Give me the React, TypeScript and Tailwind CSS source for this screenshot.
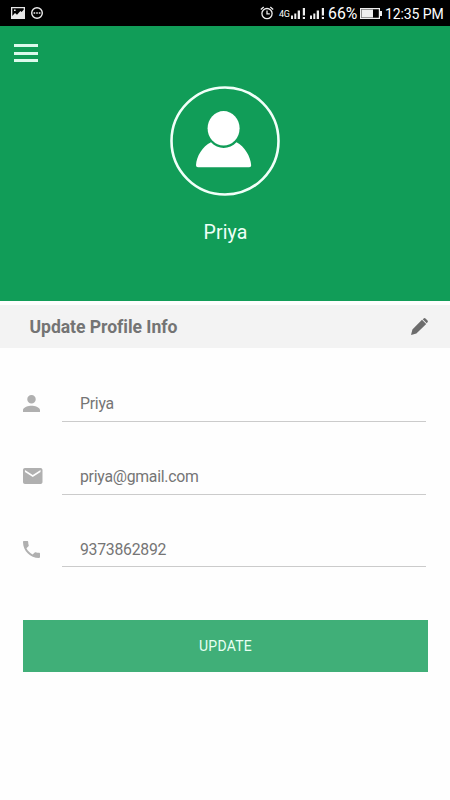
import { useState } from 'react';
import type { ReactNode } from 'react';

interface FieldProps {
  icon: ReactNode;
  type: string;
  label: string;
  value: string;
  onChange: (value: string) => void;
}

const StatusBar = () => (
  <div className="flex h-[26px] items-center bg-black text-white">
    <svg className="ml-[11px] h-3 w-[14px]" viewBox="0 0 14 12">
      <path fill="#e8e8e8" fillRule="evenodd" d="M0 0h14v12H0zM1.3 1.3v7.8L4 6l2 1.8L9.4 4l1.2 1 2.1-2.2V1.3zM3 2.5h1.6v1.6H3z" />
    </svg>
    <svg className="ml-[6px] h-3 w-3" viewBox="0 0 12 12">
      <circle cx="6" cy="6" r="5.3" fill="none" stroke="#eee" strokeWidth="1.4" />
      <path fill="#eee" d="M2.6 5.2h1.6v1.6H2.6zM5.2 5.2h1.6v1.6H5.2zM7.8 5.2h1.6v1.6H7.8z" />
    </svg>
    <svg className="ml-[217px] h-[14px] w-[14px]" viewBox="0 0 14 14" fill="none" stroke="#eee" strokeWidth="1.3">
      <circle cx="7" cy="7.6" r="5.1" />
      <path d="M7 4.5v3.4h2.8M.8 3.5 3.7.9M13.2 3.5 10.3.9" />
    </svg>
    <span className="ml-[5px] w-[11px] pt-[2px] text-[9px] leading-none tracking-[-0.2px]">4G</span>
    <Signal className="ml-px" />
    <Signal className="ml-1" />
    <span className="ml-[3px] w-[31px] whitespace-nowrap pt-[2px] text-[15.8px] leading-none">66%</span>
    <svg className="ml-px h-[11px] w-[22px]" viewBox="0 0 22 11">
      <path fill="none" stroke="#eee" strokeWidth="1.2" d="M.6.6h18.8v9.8H.6z" />
      <path fill="#eee" d="M1.5 1.5h11.5v8H1.5zM19.5 3H22v5h-2.5z" />
    </svg>
    <span className="ml-[3px] whitespace-nowrap pt-[2px] text-[14px] leading-none tracking-[-0.1px]">12:35 PM</span>
  </div>
);

const Signal = ({ className }: { className: string }) => (
  <svg className={`h-[11px] w-[15px] ${className}`} viewBox="0 0 15 11">
    <path fill="#eee" d="M0 7.5h2V11H0zM3.3 5.5h2V11h-2zM6.7 2.5H9V11H6.7zM11.8 0H14v11h-2.2z" />
    <path fill="#000" d="M11.5 7.5h3V9h-3z" />
  </svg>
);

const Field = ({ icon, type, label, value, onChange }: FieldProps) => (
  <label className="group flex h-full">
    <span className="flex w-[39px] shrink-0 items-start pt-[14px]">{icon}</span>
    <input
      type={type}
      aria-label={label}
      value={value}
      onChange={(e) => onChange(e.target.value)}
      className="h-full min-w-0 flex-1 border-b border-[#cbcbcb] bg-transparent pt-[4px] pl-[18px] text-[15.8px] tracking-[-0.26px] text-[#757575] outline-none group-last:pt-[5px]"
    />
  </label>
);

const App = () => {
  const [name, setName] = useState('Priya');
  const [email, setEmail] = useState('priya@gmail.com');
  const [phone, setPhone] = useState('9373862892');

  return (
    <div className="h-[800px] w-[450px] overflow-hidden bg-[#fefefe] font-['Roboto',sans-serif]">
      <StatusBar />

      <header className="flex h-[275px] flex-col bg-[#119d58]">
        <button type="button" aria-label="Menu" className="mt-[18px] ml-[14px] flex h-[18px] w-[24px] flex-col justify-between">
          <span className="h-[3px] w-full bg-[#dcfaec]" />
          <span className="h-[3px] w-full bg-[#dcfaec]" />
          <span className="h-[3px] w-full bg-[#dcfaec]" />
        </button>
        <svg className="mt-[24px] h-[110px] w-[110px] self-center" viewBox="0 0 110 110">
          <circle cx="55" cy="55" r="53.5" fill="none" stroke="#f1fff9" strokeWidth="2.6" />
          <ellipse cx="53.6" cy="42.3" rx="16" ry="17.2" fill="#fff" />
          <path fill="#fff" d="M41 56.2c6.8 7.6 18.5 7.6 25.5 0C74.5 60.5 80.5 70 81.2 79.3q0 2-2 2H28q-2 0-2-2C26.5 70 32.5 60.5 41 56.2z" />
        </svg>
        <h1 className="mt-[22.5px] pl-px text-center text-[19.5px] leading-[28px] tracking-[0.1px] text-[#effff7]">Priya</h1>
      </header>

      <section className="mt-1 flex h-[43px] items-center justify-between bg-[#f3f3f3] pr-[22px] pl-[29.5px]">
        <h2 className="pt-px text-[17.6px] font-bold tracking-[-0.05px] text-[#747474]">Update Profile Info</h2>
        <button type="button" aria-label="Edit">
          <svg className="h-[17px] w-[17px]" viewBox="0 0 17 17" fill="#6c6c6c">
            <path d="M11 1.8 15.2 6 5.4 15.6 0 17l1.4-5.4zM11.7 1.2l1-.8q.9-.8 1.8 0l2 2q.8.9 0 1.8l-.8 1z" />
          </svg>
        </button>
      </section>

      <form className="pr-[22px] pl-[23px]" onSubmit={(e) => e.preventDefault()}>
        <div className="mt-[33px] grid grid-rows-[41px_41px_40px] gap-y-8 pr-[2px]">
          <Field
            type="text"
            label="Name"
            value={name}
            onChange={setName}
            icon={
              <svg className="h-[17px] w-[17px]" viewBox="4 4 16 16" fill="#b0b0b0">
                <path d="M12 12c2.21 0 4-1.79 4-4s-1.79-4-4-4-4 1.79-4 4 1.79 4 4 4zm0 2c-2.67 0-8 1.34-8 4v2h16v-2c0-2.66-5.33-4-8-4z" />
              </svg>
            }
          />
          <Field
            type="email"
            label="Email"
            value={email}
            onChange={setEmail}
            icon={
              <svg className="h-4 w-[19.5px]" viewBox="2 4 20 16" preserveAspectRatio="none" fill="#b0b0b0">
                <path d="M20 4H4c-1.1 0-2 .9-2 2v12c0 1.1.9 2 2 2h16c1.1 0 2-.9 2-2V6c0-1.1-.9-2-2-2zm0 4-8 5-8-5V6l8 5 8-5v2z" />
              </svg>
            }
          />
          <Field
            type="tel"
            label="Phone"
            value={phone}
            onChange={setPhone}
            icon={
              <svg className="h-[17px] w-[17px]" viewBox="3 3 18 18" fill="#b0b0b0">
                <path d="M6.62 10.79c1.44 2.83 3.76 5.14 6.59 6.59l2.2-2.2c.27-.27.67-.36 1.02-.24 1.12.37 2.33.57 3.57.57.55 0 1 .45 1 1V20c0 .55-.45 1-1 1-9.39 0-17-7.61-17-17 0-.55.45-1 1-1h3.5c.55 0 1 .45 1 1 0 1.25.2 2.45.57 3.57.11.35.03.74-.25 1.02l-2.2 2.2z" />
              </svg>
            }
          />
        </div>
        <button type="submit" className="mt-[53px] block h-[52px] w-full bg-[#40af78] text-[14px] tracking-[0.25px] text-[#e8fff3]">
          UPDATE
        </button>
      </form>
    </div>
  );
};

export default App;
